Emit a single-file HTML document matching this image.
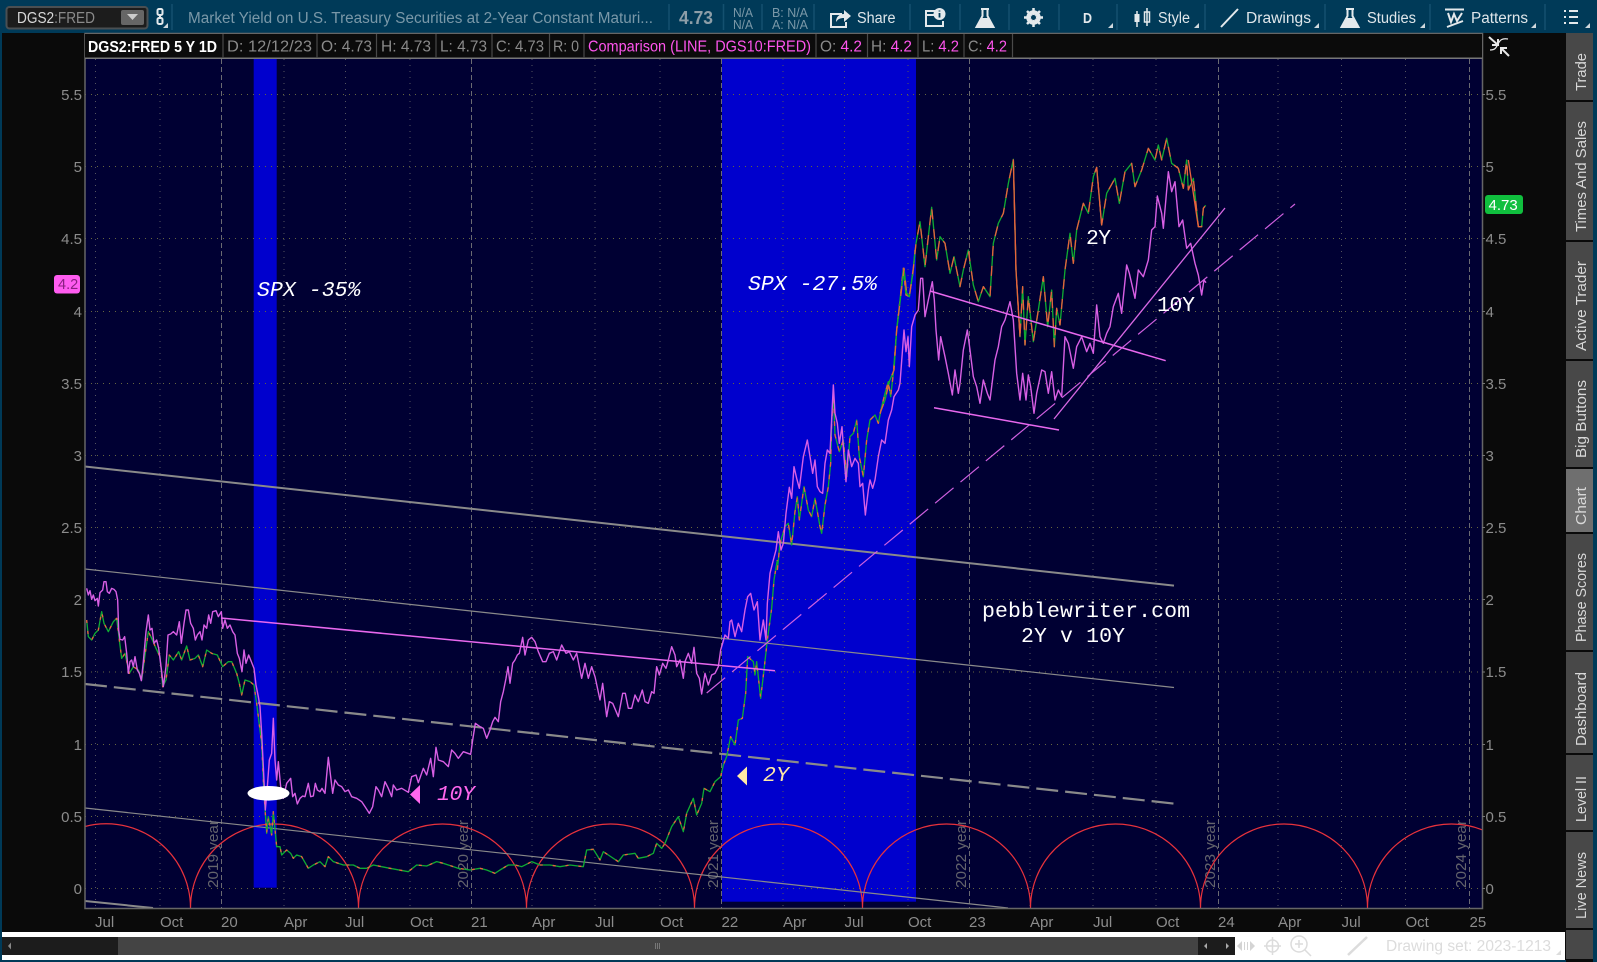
<!DOCTYPE html>
<html><head><meta charset="utf-8"><title>DGS2:FRED</title>
<style>
html,body{margin:0;padding:0;background:#0a0a0a;width:1597px;height:962px;overflow:hidden}
svg{display:block;font-family:"Liberation Sans",sans-serif}
.mono{font-family:"Liberation Mono",monospace}
.ax{fill:#8c8c8c;font-size:15px}
.yr{fill:#64646c;font-size:14.5px}
.hd{fill:#8a8a8a;font-size:15.5px}
.mg{fill:#ff55ee;font-size:15.5px}
.tb{fill:#dfe6ea;font-size:15.5px}
.tab{fill:#d8d8d8;font-size:15px}
.sep{stroke:#14506f;stroke-width:1.5}
.ic{fill:none;stroke:#e4e9ec;stroke-width:2}
.tri{fill:#cfd8dd}
</style></head><body>
<svg width="1597" height="962" viewBox="0 0 1597 962" xmlns="http://www.w3.org/2000/svg">
<defs>
<clipPath id="pl"><rect x="85" y="59" width="1397" height="849.5"/></clipPath>
<polyline id="g1" points="20,180 25,230 35,240 45,220 55,210 65,155 72,190 85,215 100,185 110,175 118,240 125,295 135,280 148,340 160,320 175,330 185,360 195,285 205,215 215,235 228,265 240,290 248,380 258,360 268,285 280,300 296,275 305,300 320,258 330,300 345,295 355,285 368,320 380,270 395,280 412,285 428,320 445,305 455,305 470,340 478,370 485,405 495,360 510,365 522,375 530,430 545,550 552,700 560,820 565,770 575,825 580,755 590,860 600,860 605,885 620,870 632,880 640,895 650,885 665,890 685,925 700,915 720,905 735,920 745,890 760,905 790,915 820,915 840,925 860,925 880,915 905,920 930,925 985,935 1010,915 1040,918 1070,905 1090,910 1120,920 1135,925 1170,930 1200,925"/>
<polyline id="g2" points="0,925 20,930 45,940 60,930 85,915 105,915 125,920 155,905 180,915 210,915 240,920 270,915 310,920 320,870 340,868 360,900 370,875 385,885 415,905 430,885 465,880 475,895 500,890 520,880 530,850 545,865 555,850 575,800 595,770 610,815 620,760 640,715 650,765 665,730 672,685 690,695 705,665 722,650 730,615 740,590 752,530 765,555 775,480 787,475 797,400 803,290 820,305 825,345 830,305 842,415 852,330 862,240 875,145 882,60 892,0"/>
<polyline id="g3" points="232,960 240,880 255,830 265,820 275,885 285,785 292,740 298,810 312,710 325,780 335,800 345,745 360,830 365,850 375,765 385,710 392,640 395,520 400,430 405,555 418,605 430,570 440,680 450,560 460,550 470,510 478,620 490,680 500,570 510,510 525,495 535,520 545,470 555,430 565,395 572,440 580,370 590,240 600,150 610,55 618,135 628,140 640,60 645,0"/>
<polyline id="g4" points="0,850 15,810 28,755 42,720 50,600 62,500 72,415 80,490 88,500 100,415 108,340 120,275 135,410 145,320 155,232 170,390 180,320 195,340 210,430 222,380 240,470 250,420 265,360 280,465 295,515 310,470 330,500 340,340 355,280 370,250 385,160 400,88 408,420 420,620 428,470 435,645 445,500 460,635 475,540 490,440 503,590 515,480 523,650 530,535 540,585 555,420 570,310 580,400 590,300 610,220 625,250 640,140 650,112 665,285 680,190 705,145 718,220 735,125 755,100 765,170 785,120 805,55 825,90 835,45 845,90 860,25 875,100 895,115 910,175 920,90 925,180 940,145 955,290 965,290 970,235 977,226"/>
</defs>

<!-- base -->
<rect width="1597" height="962" fill="#0a0a0a"/>
<rect x="0" y="0" width="2" height="962" fill="#003a58"/>
<rect x="1593" y="0" width="4" height="962" fill="#003a58"/>
<rect x="0" y="0" width="1597" height="33" fill="#003a58"/>

<!-- toolbar -->
<rect x="6.5" y="7" width="141" height="21.5" rx="3" fill="#1c1c1c" stroke="#4a4f52" stroke-width="2"/>
<text x="17" y="23" font-size="15.5" fill="#d8d8d8" textLength="78" lengthAdjust="spacingAndGlyphs">DGS2<tspan fill="#8a8a8a">:FRED</tspan></text>
<rect x="121" y="10" width="23" height="15" rx="2" fill="#666"/><path d="M127 14h11l-5.500 6z" fill="#ccc"/>
<rect x="157.500" y="9" width="5" height="6" rx="1.500" class="ic" stroke-width="1.500"/><rect x="157.500" y="18" width="5" height="6" rx="1.500" class="ic" stroke-width="1.500"/><path d="M160 14v5" class="ic" stroke-width="1.500"/><path d="M163 28h5v-5z" class="tri"/>
<path class="sep" d="M172 4v26M669 4v26M723.500 4v26M762 4v26M814 4v26M910 4v26M960 4v26M1009 4v26M1059 4v26M1117 4v26M1205 4v26M1325 4v26M1430 4v26M1545 4v26"/>
<text x="188" y="23" font-size="15.500" fill="#7a98a8" textLength="465" lengthAdjust="spacingAndGlyphs">Market Yield on U.S. Treasury Securities at 2-Year Constant Maturi...</text>
<text x="679" y="24" font-size="18" font-weight="bold" fill="#8d9ea8" textLength="34" lengthAdjust="spacingAndGlyphs">4.73</text>
<g font-size="12.500" fill="#7a98a8"><text x="733" y="17" textLength="20" lengthAdjust="spacingAndGlyphs">N/A</text><text x="733" y="29" textLength="20" lengthAdjust="spacingAndGlyphs">N/A</text><text x="772" y="17" textLength="36" lengthAdjust="spacingAndGlyphs">B: N/A</text><text x="772" y="29" textLength="36" lengthAdjust="spacingAndGlyphs">A: N/A</text></g>
<path class="ic" d="M842 14h-11v13h15v-5"/><path d="M836 22c0-5 3-8 8-8v-4l7 6-7 6v-4c-4 0-6 1-8 4z" fill="#e4e9ec"/>
<text x="857" y="23" class="tb" textLength="38.500" lengthAdjust="spacingAndGlyphs">Share</text>
<path class="ic" d="M936 11h-10v15h17v-5M926 15h8"/><circle cx="939.500" cy="14" r="6" fill="#e4e9ec"/><path d="M939.500 10.500v1M939.500 13v4.500" stroke="#003a58" stroke-width="1.800"/>
<path d="M981 9h8M982.500 9v7l-6 11h17l-6-11V9" class="ic" stroke-width="1.800"/><path d="M981 18h8l5 9h-18z" fill="#e4e9ec"/>
<circle cx="1033.500" cy="17.500" r="5.500" fill="none" stroke="#e4e9ec" stroke-width="3.500"/><path d="M1033.500 8v19M1024 17.500h19M1027 11l13 13M1040 11l-13 13" stroke="#e4e9ec" stroke-width="2.500"/><circle cx="1033.500" cy="17.500" r="2.500" fill="#003a58"/>
<text x="1083" y="23" font-size="15" font-weight="bold" fill="#e4e9ec" textLength="9" lengthAdjust="spacingAndGlyphs">D</text><path d="M1108 28h5v-5z" class="tri"/>
<path d="M1137 11v16M1147 8v18" stroke="#e4e9ec" stroke-width="1.500"/><rect x="1134.500" y="14" width="5" height="8" fill="#e4e9ec"/><rect x="1144.500" y="12" width="5" height="10" fill="none" stroke="#e4e9ec" stroke-width="1.500"/>
<text x="1158" y="23" class="tb" textLength="32" lengthAdjust="spacingAndGlyphs">Style</text><path d="M1194 28h5v-5z" class="tri"/>
<path d="M1221 27l17-18" class="ic" stroke-width="2.200"/>
<text x="1246" y="23" class="tb" textLength="65" lengthAdjust="spacingAndGlyphs">Drawings</text><path d="M1314 28h5v-5z" class="tri"/>
<path d="M1346 9h8M1347.500 9v7l-6 11h17l-6-11V9" class="ic" stroke-width="1.800"/><path d="M1346 18h8l5 9h-18z" fill="#e4e9ec"/>
<text x="1367" y="23" class="tb" textLength="49" lengthAdjust="spacingAndGlyphs">Studies</text><path d="M1420 28h5v-5z" class="tri"/>
<path d="M1445 9.500h19M1448 13l3 9 3-8 3 7 5-8M1447 27l16-6" class="ic" stroke-width="1.600"/>
<text x="1471" y="23" class="tb" textLength="57" lengthAdjust="spacingAndGlyphs">Patterns</text><path d="M1531 28h5v-5z" class="tri"/>
<path d="M1564 11h2M1569 11h9M1564 17h2M1569 17h9M1564 23h2M1569 23h9" class="ic"/><path d="M1585 28h5v-5z" class="tri"/>

<!-- plot -->
<rect x="85" y="59" width="1397" height="849.5" fill="#000033"/>
<rect x="253.700" y="59" width="23" height="828.700" fill="#0000cd"/>
<rect x="722" y="59" width="194" height="842.700" fill="#0000cd"/>

<!-- grid -->
<g fill="none" clip-path="url(#pl)">
<path stroke="#66663f" stroke-dasharray="1 5" d="M85 888.500H1482M85 816.500H1482M85 744.500H1482M85 672H1482M85 599.500H1482M85 527.500H1482M85 455.500H1482M85 383.500H1482M85 311.500H1482M85 238.500H1482M85 166.500H1482M85 94.500H1482"/>
<path stroke="#55555f" stroke-dasharray="1 5" d="M95.500 59V908M160 59V908M284 59V908M345.500 59V908M410 59V908M532 59V908M595 59V908M660 59V908M783 59V908M844.500 59V908M908 59V908M1030 59V908M1093 59V908M1156 59V908M1278 59V908M1341.500 59V908M1405.500 59V908"/>
<path stroke="#6a6a72" stroke-dasharray="5 3" d="M221.500 59V908M471.500 59V908M721.500 59V908M969.500 59V908M1218.500 59V908M1469.500 59V908"/>
</g>

<!-- year labels -->
<g class="yr">
<text transform="translate(218 888) rotate(-90)" textLength="68" lengthAdjust="spacingAndGlyphs">2019 year</text>
<text transform="translate(468 888) rotate(-90)" textLength="68" lengthAdjust="spacingAndGlyphs">2020 year</text>
<text transform="translate(718 888) rotate(-90)" textLength="68" lengthAdjust="spacingAndGlyphs">2021 year</text>
<text transform="translate(966 888) rotate(-90)" textLength="68" lengthAdjust="spacingAndGlyphs">2022 year</text>
<text transform="translate(1215 888) rotate(-90)" textLength="68" lengthAdjust="spacingAndGlyphs">2023 year</text>
<text transform="translate(1466 888) rotate(-90)" textLength="68" lengthAdjust="spacingAndGlyphs">2024 year</text>
</g>

<g clip-path="url(#pl)" fill="none">
<!-- red arcs -->
<path stroke="#e8323c" stroke-width="1.200" d="M22 908A84 84 0 0 1 190.500 908A84 84 0 0 1 358.500 908A84 84 0 0 1 526.500 908A84 84 0 0 1 694.500 908A84 84 0 0 1 862.500 908A84 84 0 0 1 1030.500 908A85 84 0 0 1 1200.500 908A83.500 84 0 0 1 1367.500 908A84 84 0 0 1 1535.500 908"/>
<!-- gray channel lines -->
<path stroke="#8a8a8a" stroke-width="2" d="M85 466.500L1174 585.600"/>
<path stroke="#8a8a8a" stroke-width="1.200" d="M85 569L1174 687.500"/>
<path stroke="#8a8a8a" stroke-width="2.200" stroke-dasharray="22 7" d="M85 684L1174 803.600"/>
<path stroke="#8a8a8a" stroke-width="1.200" d="M85 808L1008 908"/>
<path stroke="#8a8a8a" stroke-width="2" d="M85 901L153 908"/>

<!-- 2Y series -->
<g stroke-linejoin="round">
<g transform="translate(80 560) scale(.33333)" stroke-width="4"><use href="#g1" stroke="#0faa33"/><use href="#g1" stroke="#e8623c" stroke-dasharray="9 24"/></g>
<g transform="translate(480 560) scale(.33333)" stroke-width="4"><use href="#g2" stroke="#0faa33"/><use href="#g2" stroke="#e8623c" stroke-dasharray="9 30"/></g>
<g transform="translate(700 250) scale(.33333)" stroke-width="4"><use href="#g3" stroke="#0faa33"/><use href="#g3" stroke="#e8623c" stroke-dasharray="14 24"/></g>
<g transform="translate(880 130) scale(.33333)" stroke-width="4"><use href="#g4" stroke="#0faa33"/><use href="#g4" stroke="#e8623c" stroke-dasharray="30 30"/>
<polyline stroke="#e8623c" points="400,88 408,420 420,620"/>
<polyline stroke="#e8623c" points="650,112 665,285"/>
<polyline stroke="#e8623c" points="925,90 955,290"/></g>
</g>

<!-- 10Y series -->
<g stroke="#d85fe4" stroke-width="4.200" stroke-linejoin="round">
<polyline transform="translate(80 560) scale(.33333)" points="20,85 25,105 30,92 35,118 40,105 45,122 52,115 55,138 60,98 68,90 72,65 78,65 82,95 88,100 95,85 102,88 108,95 113,120 116,210 120,238 128,240 134,230 140,280 145,340 150,305 155,300 160,320 165,290 172,330 178,340 184,362 190,305 198,215 205,165 210,210 216,205 222,250 230,240 236,265 245,335 250,380 258,320 264,225 272,222 280,215 290,225 298,185 304,250 312,190 318,150 325,150 332,190 340,205 346,240 352,225 360,215 366,240 372,195 380,205 386,165 392,190 398,155 408,152 415,170 424,155 428,205 435,180 442,205 450,195 458,215 465,225 472,280 478,295 486,335 492,270 498,310 506,285 514,305 522,325 528,375 535,410 540,440 545,520 550,620 556,750 562,680 568,600 575,580 580,475 585,600 590,660 595,605 602,680 610,715 620,670 632,655 638,710 645,700 652,732 660,715 668,708 675,710 685,670 692,710 700,708 706,670 712,690 720,695 726,685 735,700 745,592 752,650 758,700 765,660 775,675 785,680 795,695 805,690 815,710 830,715 845,725 855,740 868,760 878,740 888,680 895,690 905,710 915,665 925,685 935,710 940,675 950,690 965,685 985,697 995,650 1008,645 1015,668 1030,625 1040,645 1052,595 1060,650 1068,562 1075,600 1090,605 1105,620 1115,570 1125,580 1135,595 1150,575 1172,583 1178,540 1186,490 1200,500"/>
<polyline transform="translate(480 560) scale(.33333)" points="0,500 10,505 20,535 30,510 38,485 45,472 55,485 62,425 70,395 78,355 84,320 90,370 98,310 105,300 112,285 118,280 128,232 135,285 145,240 155,232 165,245 175,275 188,305 198,305 208,280 220,275 230,300 245,255 258,280 268,275 280,300 290,280 305,355 315,310 325,355 335,320 345,350 360,420 368,370 380,470 388,425 398,430 415,470 428,400 436,400 445,445 455,445 465,405 475,425 487,390 495,425 505,430 515,395 522,400 530,320 538,345 548,310 558,325 565,300 575,260 585,285 590,320 600,300 610,355 615,305 625,280 635,310 642,262 650,340 658,355 665,402 675,340 685,375 695,345 705,340 715,320 722,270 735,225 745,235 750,185 755,180 765,230 775,190 785,215 795,150 803,110 812,100 822,150 832,125 840,240 850,180 858,240 862,130 870,40 880,0"/>
<polyline transform="translate(700 250) scale(.33333)" points="220,930 228,900 235,845 243,900 250,880 258,790 268,712 275,745 282,650 290,685 298,715 310,620 322,570 330,620 338,670 345,630 352,710 360,725 368,730 375,640 382,600 390,610 400,405 405,490 412,520 418,580 426,530 432,620 438,695 445,600 455,650 465,625 475,640 480,710 488,700 496,795 505,720 510,690 518,715 525,690 535,620 545,570 555,580 565,510 575,480 582,440 595,420 600,400 606,320 612,240 618,305 624,260 628,350 635,230 645,195 655,180 662,85 668,85 675,200 685,150 697,95 703,150 708,240 716,330 722,260 735,320 745,370 757,435 765,360 775,430 780,400"/>
<polyline transform="translate(880 130) scale(.33333)" points="240,760 250,660 262,600 270,660 280,740 290,770 300,820 310,750 322,790 330,810 345,690 355,650 365,590 375,570 390,515 400,570 410,730 420,810 428,730 438,810 445,735 452,770 462,850 470,790 485,720 495,725 505,790 515,725 525,810 535,780 545,800 555,620 565,640 580,715 590,650 605,620 620,665 630,640 640,670 650,525 660,620 670,640 680,610 690,590 700,530 715,490 725,550 740,405 748,430 765,505 775,420 790,440 805,390 815,300 825,290 832,198 845,250 850,295 865,125 875,185 885,155 897,290 908,270 920,355 932,340 945,400 955,435 965,495 972,450 978,458"/>
</g>

<!-- magenta trend lines -->
<g stroke="#e868ee" stroke-width="1.500">
<path d="M221 618L775 670.700"/>
<path d="M930 291L1165.700 360.700"/>
<path d="M934 407.700L1059 430"/>
<path stroke="#d868e4" stroke-width="1.300" d="M1054 419L1225 208"/>
<path stroke="#d060e0" stroke-width="1.200" stroke-dasharray="24 9" d="M706.700 693L1295 204"/>
</g>

<ellipse cx="268.500" cy="793.300" rx="21" ry="7.300" fill="#fff"/>
<path d="M410 794.500L420 785V804z" fill="#ff66ee"/>
<path d="M737 776L747 766.500V785.500z" fill="#ffe9a6"/>
</g>

<!-- chart annotations -->
<g class="mono" font-size="21.500">
<text x="257" y="296" font-style="italic" fill="#fff" textLength="103.500">SPX -35%</text>
<text x="748" y="290" font-style="italic" fill="#fff" textLength="129">SPX -27.5%</text>
<text x="437" y="800" font-style="italic" fill="#ff66ee" textLength="38">10Y</text>
<text x="763" y="781" font-style="italic" fill="#ffe9a6" textLength="26">2Y</text>
<text x="982" y="617" fill="#fff" textLength="208">pebblewriter.com</text>
<text x="1021" y="642" fill="#fff" textLength="104">2Y v 10Y</text>
<text x="1086" y="244" fill="#fff" textLength="25">2Y</text>
<text x="1157" y="311" fill="#fff" textLength="38">10Y</text>
</g>

<!-- frame lines -->
<path d="M85 33.500H1482.500V908.500H85z" fill="none" stroke="#666" stroke-width="1.500"/>
<rect x="85" y="34" width="1397" height="24" fill="#0b0b0b"/>
<path d="M85 58.200H1482.500" stroke="#777" stroke-width="1.500"/>
<path stroke="#4a4a4a" stroke-width="1.200" d="M223 34v24M317 34v24M376.500 34v24M436 34v24M492 34v24M549.500 34v24M584 34v24M816 34v24M867.500 34v24M918 34v24M964 34v24M1012.500 34v24"/>
<text x="88" y="52" font-size="15.500" font-weight="bold" fill="#fff" textLength="129" lengthAdjust="spacingAndGlyphs">DGS2:FRED 5 Y 1D</text>
<text x="227" y="51.500" class="hd" textLength="85" lengthAdjust="spacingAndGlyphs">D: 12/12/23</text>
<text x="321" y="51.500" class="hd" textLength="51" lengthAdjust="spacingAndGlyphs">O: 4.73</text>
<text x="381" y="51.500" class="hd" textLength="50" lengthAdjust="spacingAndGlyphs">H: 4.73</text>
<text x="440" y="51.500" class="hd" textLength="47" lengthAdjust="spacingAndGlyphs">L: 4.73</text>
<text x="496" y="51.500" class="hd" textLength="48" lengthAdjust="spacingAndGlyphs">C: 4.73</text>
<text x="553" y="51.500" class="hd" textLength="26" lengthAdjust="spacingAndGlyphs">R: 0</text>
<text x="588" y="51.500" class="mg" textLength="223" lengthAdjust="spacingAndGlyphs">Comparison (LINE, DGS10:FRED)</text>
<text x="820" y="51.500" class="hd" textLength="42" lengthAdjust="spacingAndGlyphs">O: <tspan fill="#ff55ee">4.2</tspan></text>
<text x="871" y="51.500" class="hd" textLength="41" lengthAdjust="spacingAndGlyphs">H: <tspan fill="#ff55ee">4.2</tspan></text>
<text x="922" y="51.500" class="hd" textLength="37" lengthAdjust="spacingAndGlyphs">L: <tspan fill="#ff55ee">4.2</tspan></text>
<text x="968" y="51.500" class="hd" textLength="39" lengthAdjust="spacingAndGlyphs">C: <tspan fill="#ff55ee">4.2</tspan></text>

<!-- compare icon -->
<path d="M1489 37l9 8M1498 39v6h-6" stroke="#e8e8e8" stroke-width="2" fill="none"/>
<path d="M1490 50c5 0 6-2 8-6s4-6 10-5" stroke="#e8e8e8" stroke-width="1.300" fill="none"/>
<path d="M1509 56l-8-8M1501 54v-6h6" stroke="#e8e8e8" stroke-width="2" fill="none"/>

<!-- y axes -->
<path stroke="#777" d="M1482 94.500h3M1482 166.500h3M1482 238.500h3M1482 311.500h3M1482 383.500h3M1482 455.500h3M1482 527.500h3M1482 599.500h3M1482 672h3M1482 744.500h3M1482 816.500h3M1482 888.500h3"/>
<g class="ax" text-anchor="end">
<text x="82" y="100">5.5</text><text x="82" y="172">5</text><text x="82" y="244">4.5</text><text x="82" y="317">4</text><text x="82" y="389">3.5</text><text x="82" y="461">3</text><text x="82" y="533">2.5</text><text x="82" y="605">2</text><text x="82" y="677">1.5</text><text x="82" y="750">1</text><text x="82" y="822">0.5</text><text x="82" y="894">0</text>
</g>
<g class="ax">
<text x="1485.500" y="100">5.5</text><text x="1485.500" y="172">5</text><text x="1485.500" y="244">4.5</text><text x="1485.500" y="317">4</text><text x="1485.500" y="389">3.5</text><text x="1485.500" y="461">3</text><text x="1485.500" y="533">2.5</text><text x="1485.500" y="605">2</text><text x="1485.500" y="677">1.5</text><text x="1485.500" y="750">1</text><text x="1485.500" y="822">0.5</text><text x="1485.500" y="894">0</text>
</g>
<rect x="54" y="275" width="26" height="18.500" rx="3" fill="#ff5cf0"/>
<text x="58" y="289" font-size="14.500" fill="#8a1f80">4.2</text>
<rect x="1485" y="195" width="38" height="19" rx="3" fill="#10bf3e"/>
<text x="1488.500" y="210" font-size="15" fill="#fff">4.73</text>

<!-- x axis -->
<g class="ax">
<text x="95" y="927">Jul</text><text x="160" y="927">Oct</text><text x="221" y="927">20</text><text x="284" y="927">Apr</text><text x="345" y="927">Jul</text><text x="410" y="927">Oct</text><text x="471" y="927">21</text><text x="532" y="927">Apr</text><text x="595" y="927">Jul</text><text x="660" y="927">Oct</text><text x="721.500" y="927">22</text><text x="783" y="927">Apr</text><text x="844.500" y="927">Jul</text><text x="908" y="927">Oct</text><text x="969" y="927">23</text><text x="1030" y="927">Apr</text><text x="1093" y="927">Jul</text><text x="1156" y="927">Oct</text><text x="1218" y="927">24</text><text x="1278" y="927">Apr</text><text x="1341.500" y="927">Jul</text><text x="1405.500" y="927">Oct</text><text x="1469.500" y="927">25</text>
</g>

<!-- bottom bar -->
<rect x="2" y="932" width="1563" height="28" fill="#fff"/>
<rect x="0" y="960" width="1566" height="2" fill="#003a58"/>
<rect x="2" y="937" width="116" height="18" fill="#1c1c1c"/>
<rect x="118" y="937" width="1080" height="18" fill="#444"/>
<rect x="1198" y="937" width="37" height="18" fill="#1c1c1c"/>
<path d="M8 946l3-3.500v7z" fill="#888"/><path d="M1204 946l3-3v6zM1226 943l3 3-3 3z" fill="#aaa"/>
<path stroke="#777" d="M655.500 943v6M657.500 943v6M659.500 943v6"/>
<path d="M1237 946l5-5v10zM1255 946l-5-5v10z" fill="#d4d4d4"/><path stroke="#d4d4d4" d="M1244.500 942v8M1247.500 942v8"/>
<g fill="none" stroke="#dcdcdc" stroke-width="1.500"><circle cx="1272.500" cy="946" r="6"/><path d="M1272.500 937v18M1264 946h17"/><circle cx="1299" cy="944" r="8"/><path d="M1299 940v8M1295 944h8M1305 950l6 6"/></g>
<path d="M1348 955l19-18" stroke="#dcdcdc" stroke-width="2.500"/>
<text x="1386" y="951" font-size="15.500" fill="#dcdcdc" textLength="165" lengthAdjust="spacingAndGlyphs">Drawing set: 2023-1213</text>
<path d="M1556 955h5v-5z" fill="#dcdcdc"/>

<!-- right tabs -->
<g fill="#484848">
<rect x="1566" y="33" width="27" height="67"/><rect x="1566" y="102" width="27" height="138"/><rect x="1566" y="242" width="27" height="117"/><rect x="1566" y="361" width="27" height="106"/><rect x="1566" y="469" width="27" height="63" fill="#6f6f6f"/><rect x="1566" y="534" width="27" height="116"/><rect x="1566" y="652" width="27" height="101"/><rect x="1566" y="755" width="27" height="75"/><rect x="1566" y="832" width="27" height="96"/><rect x="1566" y="930" width="27" height="29"/>
</g>
<g class="tab">
<text transform="translate(1586 91) rotate(-90)" textLength="38" lengthAdjust="spacingAndGlyphs">Trade</text>
<text transform="translate(1586 232) rotate(-90)" textLength="111" lengthAdjust="spacingAndGlyphs">Times And Sales</text>
<text transform="translate(1586 351) rotate(-90)" textLength="90" lengthAdjust="spacingAndGlyphs">Active Trader</text>
<text transform="translate(1586 458) rotate(-90)" textLength="78" lengthAdjust="spacingAndGlyphs">Big Buttons</text>
<text transform="translate(1586 525) rotate(-90)" textLength="38" lengthAdjust="spacingAndGlyphs">Chart</text>
<text transform="translate(1586 642) rotate(-90)" textLength="89" lengthAdjust="spacingAndGlyphs">Phase Scores</text>
<text transform="translate(1586 746) rotate(-90)" textLength="74" lengthAdjust="spacingAndGlyphs">Dashboard</text>
<text transform="translate(1586 822) rotate(-90)" textLength="46" lengthAdjust="spacingAndGlyphs">Level II</text>
<text transform="translate(1586 919) rotate(-90)" textLength="67" lengthAdjust="spacingAndGlyphs">Live News</text>
</g>
</svg>
</body></html>
